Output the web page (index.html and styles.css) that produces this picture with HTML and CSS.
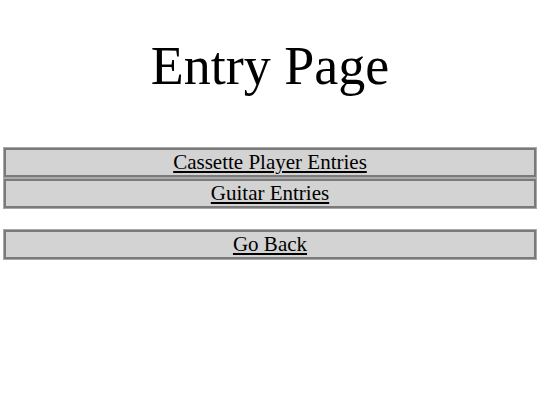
FILE: index.html
```html
<!DOCTYPE html>
<html>
<head>
<meta charset="utf-8">
<title>Entry Page</title>
<link rel="stylesheet" href="styles.css">
</head>
<body>
<h1 class="title">Entry Page</h1>
<div class="group">
  <a class="btn" href="#">Cassette Player Entries</a>
  <a class="btn" href="#">Guitar Entries</a>
</div>
<div class="group">
  <a class="btn" href="#">Go Back</a>
</div>
</body>
</html>
```
FILE: styles.css
```css
body {
  margin: 0;
  padding: 0 4px;
  font-family: "Liberation Serif", "Times New Roman", serif;
  background: #fff;
  color: #000;
}
.title {
  margin: 0;
  padding-top: 35px;
  height: 148px;
  box-sizing: border-box;
  text-align: center;
  font-size: 54px;
  font-weight: normal;
  line-height: 62px;
}
.group {
  display: flex;
  flex-direction: column;
  gap: 2px;
  margin-bottom: 22px;
}
.btn {
  display: block;
  height: 29px;
  box-sizing: border-box;
  background: #d3d3d3;
  border: 2px solid #7a7a7a;
  box-shadow: 0 0 0 1px #a9a9a9;
  text-align: center;
  color: #000;
  font-size: 21px;
  line-height: 25px;
  text-decoration: underline;
}
```
